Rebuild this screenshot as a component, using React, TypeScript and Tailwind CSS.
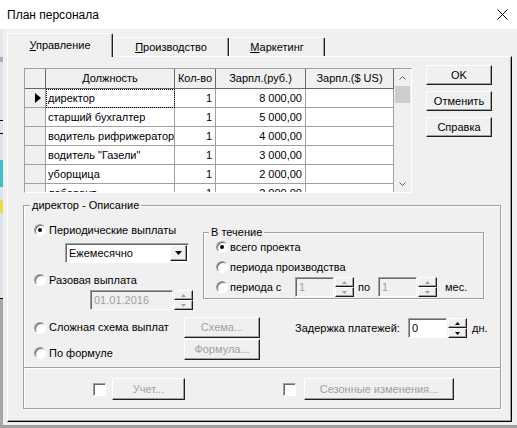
import type { ReactNode } from "react";

const raised =
  "bg-[#f0f0f0] border border-t-white border-l-white border-r-[#1e1e1e] border-b-[#1e1e1e] shadow-[inset_-1px_-1px_0_#a0a0a0]";
const sunken =
  "border border-t-[#a0a0a0] border-l-[#a0a0a0] border-r-white border-b-white shadow-[inset_1px_1px_0_#696969]";
const etched = "border border-[#a0a0a0] shadow-[inset_1px_1px_0_#fff,1px_1px_0_#fff]";

const rows = [
  ["директор", "1", "8 000,00"],
  ["старший бухгалтер", "1", "5 000,00"],
  ["водитель рифрижератор", "1", "4 000,00"],
  ['водитель "Газели"', "1", "3 000,00"],
  ["уборщица", "1", "2 000,00"],
  ["лаборант", "1", "2 000,00"],
];

const Button = ({
  children,
  className = "",
  disabled = false,
}: {
  children: ReactNode;
  className?: string;
  disabled?: boolean;
}) => (
  <div
    className={`${raised} flex shrink-0 items-center justify-center whitespace-nowrap ${
      disabled ? "text-[#a0a0a0]" : "text-black"
    } ${className}`}
  >
    {children}
  </div>
);

const Radio = ({ checked = false }: { checked?: boolean }) => (
  <span
    className={`flex h-[12px] w-[12px] shrink-0 items-center justify-center rounded-full bg-white ${sunken}`}
  >
    {checked && <span className="h-[4px] w-[4px] rounded-full bg-black" />}
  </span>
);

const Check = () => (
  <span className={`block h-[13px] w-[13px] shrink-0 bg-white ${sunken}`} />
);

const Spinner = ({ enabled = false }: { enabled?: boolean }) => {
  const c = enabled ? "#000" : "#a0a0a0";
  return (
    <div className="flex h-[20px] w-[19px] shrink-0 flex-col">
      <div className={`${raised} flex flex-1 items-center justify-center`}>
        <svg width="5" height="3" viewBox="0 0 5 3">
          <polygon points="2.5,0 5,3 0,3" fill={c} />
        </svg>
      </div>
      <div className={`${raised} flex flex-1 items-center justify-center`}>
        <svg width="5" height="3" viewBox="0 0 5 3">
          <polygon points="0,0 5,0 2.5,3" fill={c} />
        </svg>
      </div>
    </div>
  );
};

const Field = ({ value, className = "" }: { value: string; className?: string }) => (
  <div
    className={`${sunken} flex h-[20px] shrink-0 items-center bg-[#f0f0f0] pl-[3px] text-[#a0a0a0] ${className}`}
  >
    {value}
  </div>
);

const Chevron = ({ up }: { up?: boolean }) => (
  <svg width="7" height="4" viewBox="0 0 7 4">
    <polyline
      points={up ? "0.5,3.5 3.5,0.5 6.5,3.5" : "0.5,0.5 3.5,3.5 6.5,0.5"}
      fill="none"
      stroke="#606060"
    />
  </svg>
);

const Grid = () => (
  <div className="mt-[3px] flex h-[125px] w-[388px] shrink-0 overflow-hidden border border-t-[#a0a0a0] border-l-[#a0a0a0] border-r-white border-b-white bg-white text-[11px]">
    <div className="flex w-[369px] flex-col">
      <div className="flex h-[20px] shrink-0 bg-[#f0f0f0]">
        <div className="w-[21px] border-r border-b border-[#696969]" />
        <div className="w-[129px] border-r border-b border-[#696969] text-center leading-[19px]">Должность</div>
        <div className="w-[41px] border-r border-b border-[#696969] text-center leading-[19px]">Кол-во</div>
        <div className="w-[90px] border-r border-b border-[#696969] text-center leading-[19px]">Зарпл.(руб.)</div>
        <div className="w-[88px] border-r border-b border-[#696969] text-center leading-[19px]">Зарпл.($ US)</div>
      </div>
      {rows.map((r, i) => (
        <div key={i} className="flex h-[19px] shrink-0">
          <div className="flex w-[21px] items-center justify-end border-r border-b border-[#a0a0a0] bg-[#f0f0f0] pr-[4px]">
            {i === 0 && (
              <svg width="6" height="10" viewBox="0 0 6 10">
                <polygon points="0,0 6,5 0,10" fill="#000" />
              </svg>
            )}
          </div>
          <div
            className={`w-[129px] overflow-hidden whitespace-nowrap border-r border-b border-[#a0a0a0] pl-[2px] leading-[18px] ${
              i === 0 ? "outline-1 -outline-offset-1 outline-dotted outline-black" : ""
            }`}
          >
            {r[0]}
          </div>
          <div className="w-[41px] border-r border-b border-[#a0a0a0] pr-[3px] text-right leading-[18px]">{r[1]}</div>
          <div className="w-[90px] border-r border-b border-[#a0a0a0] pr-[3px] text-right leading-[18px]">{r[2]}</div>
          <div className="w-[88px] border-r border-b border-[#a0a0a0]" />
        </div>
      ))}
    </div>
    <div className="flex w-[17px] flex-col bg-[#f0f0f0]">
      <div className="flex h-[17px] items-center justify-center">
        <Chevron up />
      </div>
      <div className="ml-[1px] h-[17px] w-[15px] bg-[#cdcdcd]" />
      <div className="mt-auto flex h-[17px] items-center justify-center">
        <Chevron />
      </div>
    </div>
  </div>
);

const LeftStrip = () => (
  <div className="flex w-[3px] shrink-0 flex-col">
    <div className="h-[28px] bg-[#e4e8ee]" />
    <div className="h-[5px] bg-[#a8b0b8]" />
    <div className="h-[58px] bg-[#dde3ea]" />
    <div className="h-[1px] bg-black" />
    <div className="h-[12px] bg-[#dde3ea]" />
    <div className="h-[1px] bg-black" />
    <div className="h-[26px] bg-[#dde3ea]" />
    <div className="h-[27px] bg-[#3cc0c8]" />
    <div className="h-[13px] bg-[#dde3ea]" />
    <div className="h-[13px] bg-[#e6e040]" />
    <div className="h-[85px] bg-[#dde3ea]" />
    <div className="h-[1px] bg-black" />
    <div className="flex-1 bg-[#a8a8a8]" />
  </div>
);

const App = () => {
  return (
    <div className="flex h-[428px] w-[517px] flex-col overflow-hidden bg-[#f0f0f0] font-['Liberation_Sans',Arial,sans-serif] text-[11px] text-black">
      <div className="flex h-[29px] shrink-0 items-center justify-between bg-white pr-[9px] pl-[7px]">
        <span className="text-[12px]">План персонала</span>
        <svg width="11" height="11" viewBox="0 0 11 11">
          <path d="M0.5 0.5 L10.5 10.5 M10.5 0.5 L0.5 10.5" stroke="#000" strokeWidth="1" />
        </svg>
      </div>

      <div className="flex min-h-0 flex-1">
        <LeftStrip />
        <div className="flex-1 pt-[4px] pl-[4px]">
          <div className="flex h-[23px] items-end">
            <div className="relative z-10 -mb-px flex h-[24px] w-[106px] items-center justify-center rounded-t-[2px] border-t border-r border-l border-t-white border-r-[#1e1e1e] border-l-white bg-[#f0f0f0] pb-[1px] shadow-[inset_-1px_0_0_#a0a0a0]">
              <span>
                <span className="underline">У</span>правление
              </span>
            </div>
            <div className="flex h-[19px] w-[116px] items-center justify-center rounded-t-[2px] border-t border-r border-l border-t-white border-r-[#1e1e1e] border-l-white shadow-[inset_-1px_0_0_#a0a0a0]">
              <span>
                <span className="underline">П</span>роизводство
              </span>
            </div>
            <div className="flex h-[19px] w-[96px] items-center justify-center rounded-t-[2px] border-t border-r border-l border-t-white border-r-[#1e1e1e] border-l-white shadow-[inset_-1px_0_0_#a0a0a0]">
              <span>
                <span className="underline">М</span>аркетинг
              </span>
            </div>
          </div>

          <div className="h-[366px] w-[505px] border border-t-white border-r-black border-b-black border-l-white shadow-[inset_-1px_-1px_0_#a0a0a0]">
            <div className="flex items-start pt-[8px] pl-[16px]">
              <Grid />
              <div className="ml-[14px] flex flex-col gap-[6px]">
                <Button className="h-[20px] w-[66px]">OK</Button>
                <Button className="h-[20px] w-[66px]">Отменить</Button>
                <Button className="h-[20px] w-[66px]">Справка</Button>
              </div>
            </div>

            <fieldset className={`mt-[6px] ml-[15px] w-[478px] pb-[8px] ${etched}`}>
              <legend className="ml-[6px] bg-[#f0f0f0] px-[2px] leading-[13px]">директор - Описание</legend>
              <div className="pt-[10px]">
                <div className="flex">
                  <div className="w-[179px] shrink-0">
                    <div className="flex h-[16px] items-center pl-[10px]">
                      <Radio checked />
                      <span className="ml-[3px] whitespace-nowrap">Периодические выплаты</span>
                    </div>
                    <div className={`mt-[5px] ml-[41px] flex h-[20px] w-[124px] items-center justify-between bg-white pl-[3px] ${sunken}`}>
                      <span>Ежемесячно</span>
                      <div className={`${raised} mr-[1px] flex h-[16px] w-[17px] items-center justify-center`}>
                        <svg width="7" height="4" viewBox="0 0 7 4">
                          <polygon points="0,0 7,0 3.5,4" fill="#000" />
                        </svg>
                      </div>
                    </div>
                    <div className="mt-[9px] flex h-[16px] items-center pl-[10px]">
                      <Radio />
                      <span className="ml-[3px] whitespace-nowrap">Разовая выплата</span>
                    </div>
                    <div className="mt-[2px] ml-[66px] flex">
                      <Field value="01.01.2016" className="w-[83px]" />
                      <div className="ml-px">
                        <Spinner />
                      </div>
                    </div>
                  </div>

                  <fieldset className={`mt-[4px] h-fit w-[281px] pb-[1px] ${etched}`}>
                    <legend className="ml-[5px] bg-[#f0f0f0] px-[2px] leading-[13px]">В течение</legend>
                    <div className="flex h-[16px] items-center pl-[12px]">
                      <Radio checked />
                      <span className="ml-[2px]">всего проекта</span>
                    </div>
                    <div className="mt-[4px] flex h-[16px] items-center pl-[12px]">
                      <Radio />
                      <span className="ml-[2px]">периода производства</span>
                    </div>
                    <div className="mt-[2px] flex h-[20px] items-center pl-[12px]">
                      <Radio />
                      <span className="ml-[2px] w-[65px] shrink-0">периода с</span>
                      <Field value="1" className="w-[39px]" />
                      <div className="ml-px">
                        <Spinner />
                      </div>
                      <span className="w-[24px] shrink-0 pl-[4px]">по</span>
                      <Field value="1" className="w-[39px]" />
                      <div className="ml-px">
                        <Spinner />
                      </div>
                      <span className="ml-[8px]">мес.</span>
                    </div>
                  </fieldset>
                </div>

                <div className="mt-[7px] flex">
                  <div className="w-[236px] shrink-0">
                    <div className="flex h-[21px] items-center pl-[10px]">
                      <Radio />
                      <span className="ml-[3px] flex-1 whitespace-nowrap">Сложная схема выплат</span>
                      <Button disabled className="h-[21px] w-[76px]">
                        Схема...
                      </Button>
                    </div>
                    <div className="mt-px flex h-[21px] items-start pl-[10px]">
                      <div className="mt-[6px] flex h-[16px] flex-1 items-center">
                        <Radio />
                        <span className="ml-[3px]">По формуле</span>
                      </div>
                      <Button disabled className="h-[21px] w-[76px]">
                        Формула...
                      </Button>
                    </div>
                  </div>
                  <div className="mt-px ml-[35px] flex h-[20px] items-center">
                    <span className="w-[113px] shrink-0 whitespace-nowrap">Задержка платежей:</span>
                    <div className={`${sunken} flex h-[20px] w-[39px] items-center bg-white pl-[3px]`}>0</div>
                    <div className="ml-px">
                      <Spinner enabled />
                    </div>
                    <span className="ml-[5px]">дн.</span>
                  </div>
                </div>

                <div className="mt-[7px] h-[2px] border-t border-b border-t-[#a0a0a0] border-b-white" />

                <div className="mt-[9px] flex h-[22px] items-center">
                  <div className="ml-[69px]">
                    <Check />
                  </div>
                  <Button disabled className="ml-[6px] h-[22px] w-[73px]">
                    Учет...
                  </Button>
                  <div className="ml-[98px]">
                    <Check />
                  </div>
                  <Button disabled className="ml-[8px] h-[22px] w-[150px]">
                    Сезонные изменения...
                  </Button>
                </div>
              </div>
            </fieldset>
          </div>
        </div>
      </div>
      <div className="h-[3px] shrink-0 bg-[#a0a0a0]" />
    </div>
  );
};

export default App;
